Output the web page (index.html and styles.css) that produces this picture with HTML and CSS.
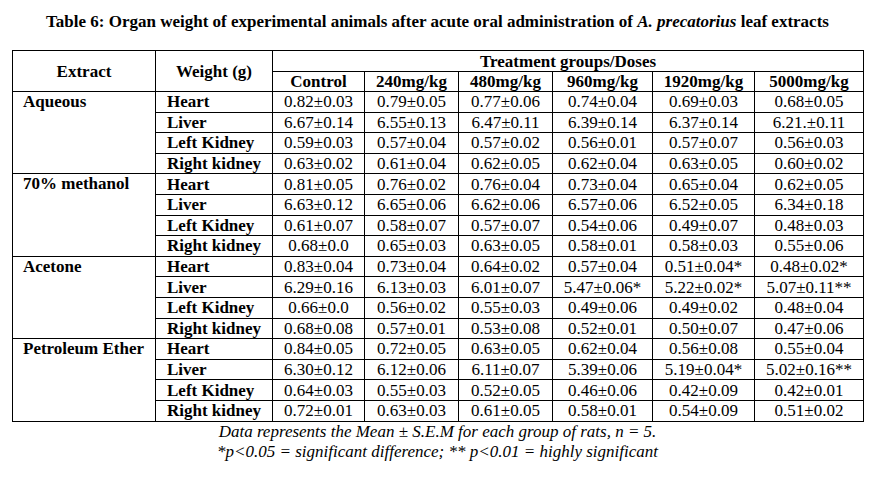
FILE: index.html
```html
<!DOCTYPE html>
<html>
<head>
<meta charset="utf-8">
<link rel="stylesheet" href="styles.css">
</head>
<body>
<div class="page">
  <h1 class="title">Table 6: Organ weight of experimental animals after acute oral administration of <i>A. precatorius</i> leaf extracts</h1>
  <table class="data">
    <colgroup>
      <col class="c-ext"><col class="c-wt"><col class="c1"><col class="c2"><col class="c3"><col class="c4"><col class="c5"><col class="c6">
    </colgroup>
    <thead>
      <tr class="h1">
        <th rowspan="2">Extract</th>
        <th rowspan="2">Weight (g)</th>
        <th colspan="6">Treatment groups/Doses</th>
      </tr>
      <tr class="h2">
        <th>Control</th><th>240mg/kg</th><th>480mg/kg</th><th>960mg/kg</th><th>1920mg/kg</th><th>5000mg/kg</th>
      </tr>
    </thead>
    <tbody>
      <tr><td class="ext" rowspan="4">Aqueous</td><td class="org">Heart</td><td>0.82±0.03</td><td>0.79±0.05</td><td>0.77±0.06</td><td>0.74±0.04</td><td>0.69±0.03</td><td>0.68±0.05</td></tr>
      <tr><td class="org">Liver</td><td>6.67±0.14</td><td>6.55±0.13</td><td>6.47±0.11</td><td>6.39±0.14</td><td>6.37±0.14</td><td>6.21.±0.11</td></tr>
      <tr><td class="org">Left Kidney</td><td>0.59±0.03</td><td>0.57±0.04</td><td>0.57±0.02</td><td>0.56±0.01</td><td>0.57±0.07</td><td>0.56±0.03</td></tr>
      <tr><td class="org">Right kidney</td><td>0.63±0.02</td><td>0.61±0.04</td><td>0.62±0.05</td><td>0.62±0.04</td><td>0.63±0.05</td><td>0.60±0.02</td></tr>

      <tr><td class="ext" rowspan="4">70% methanol</td><td class="org">Heart</td><td>0.81±0.05</td><td>0.76±0.02</td><td>0.76±0.04</td><td>0.73±0.04</td><td>0.65±0.04</td><td>0.62±0.05</td></tr>
      <tr><td class="org">Liver</td><td>6.63±0.12</td><td>6.65±0.06</td><td>6.62±0.06</td><td>6.57±0.06</td><td>6.52±0.05</td><td>6.34±0.18</td></tr>
      <tr><td class="org">Left Kidney</td><td>0.61±0.07</td><td>0.58±0.07</td><td>0.57±0.07</td><td>0.54±0.06</td><td>0.49±0.07</td><td>0.48±0.03</td></tr>
      <tr><td class="org">Right kidney</td><td>0.68±0.0</td><td>0.65±0.03</td><td>0.63±0.05</td><td>0.58±0.01</td><td>0.58±0.03</td><td>0.55±0.06</td></tr>

      <tr><td class="ext" rowspan="4">Acetone</td><td class="org">Heart</td><td>0.83±0.04</td><td>0.73±0.04</td><td>0.64±0.02</td><td>0.57±0.04</td><td>0.51±0.04*</td><td>0.48±0.02*</td></tr>
      <tr><td class="org">Liver</td><td>6.29±0.16</td><td>6.13±0.03</td><td>6.01±0.07</td><td>5.47±0.06*</td><td>5.22±0.02*</td><td>5.07±0.11**</td></tr>
      <tr><td class="org">Left Kidney</td><td>0.66±0.0</td><td>0.56±0.02</td><td>0.55±0.03</td><td>0.49±0.06</td><td>0.49±0.02</td><td>0.48±0.04</td></tr>
      <tr><td class="org">Right kidney</td><td>0.68±0.08</td><td>0.57±0.01</td><td>0.53±0.08</td><td>0.52±0.01</td><td>0.50±0.07</td><td>0.47±0.06</td></tr>

      <tr><td class="ext" rowspan="4">Petroleum Ether</td><td class="org">Heart</td><td>0.84±0.05</td><td>0.72±0.05</td><td>0.63±0.05</td><td>0.62±0.04</td><td>0.56±0.08</td><td>0.55±0.04</td></tr>
      <tr><td class="org">Liver</td><td>6.30±0.12</td><td>6.12±0.06</td><td>6.11±0.07</td><td>5.39±0.06</td><td>5.19±0.04*</td><td>5.02±0.16**</td></tr>
      <tr><td class="org">Left Kidney</td><td>0.64±0.03</td><td>0.55±0.03</td><td>0.52±0.05</td><td>0.46±0.06</td><td>0.42±0.09</td><td>0.42±0.01</td></tr>
      <tr><td class="org">Right kidney</td><td>0.72±0.01</td><td>0.63±0.03</td><td>0.61±0.05</td><td>0.58±0.01</td><td>0.54±0.09</td><td>0.51±0.02</td></tr>
    </tbody>
  </table>
  <div class="note">
    <p>Data represents the Mean ± S.E.M for each group of rats, n = 5.</p>
    <p>*p&lt;0.05 = significant difference; ** p&lt;0.01 = highly significant</p>
  </div>
</div>
</body>
</html>
```
FILE: styles.css
```css
html, body {
  margin: 0;
  padding: 0;
  background: #fff;
}
body {
  font-family: "Liberation Serif", "Times New Roman", serif;
  color: #000;
}
.page {
  width: 851px;
  padding: 12px 18px 0 12px;
}
.title {
  margin: 0;
  height: 38px;
  font-size: 17px;
  font-weight: bold;
  text-align: center;
  line-height: 20px;
}
.title i {
  font-style: italic;
}
.data {
  border-collapse: collapse;
  table-layout: fixed;
  width: 851px;
}
.c-ext { width: 143px; }
.c-wt { width: 117px; }
.c1 { width: 92px; }
.c2 { width: 94px; }
.c3 { width: 94px; }
.c4 { width: 100px; }
.c5 { width: 102px; }
.c6 { width: 109px; }
.data th, .data td {
  border: 1px solid #000;
  padding: 0;
  white-space: nowrap;
  overflow: hidden;
  font-size: 17px;
  line-height: 19px;
}
.data th {
  font-weight: bold;
  text-align: center;
}
.h1 { height: 21px; }
.h2 { height: 20px; }
.data tbody tr { height: 20.6px; }
.data td {
  text-align: center;
}
.data td.org {
  font-weight: bold;
  text-align: left;
  padding-left: 11px;
}
.data td.ext {
  font-weight: bold;
  text-align: left;
  vertical-align: top;
  padding-left: 10px;
}
.note {
  text-align: center;
  font-style: italic;
  font-size: 17px;
  line-height: 20px;
}
.note p {
  margin: 0;
}
```
